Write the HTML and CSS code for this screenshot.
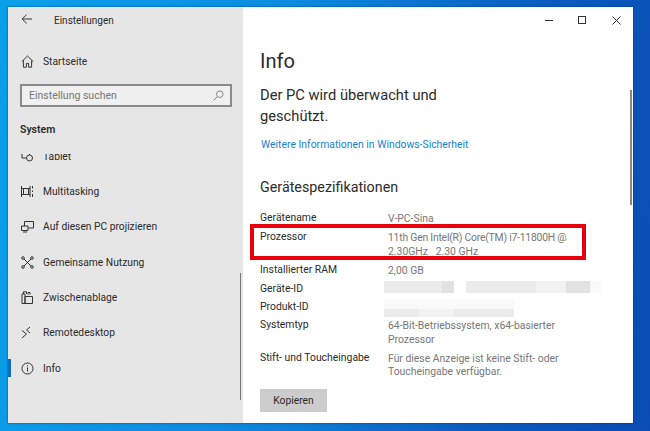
FILE: index.html
```html
<!DOCTYPE html>
<html lang="de">
<head>
<meta charset="utf-8">
<title>Einstellungen</title>
<link rel="stylesheet" href="styles.css">
</head>
<body>
<div class="window">
  <aside class="sidebar">
    <div class="titlebar">
      <svg class="back" width="12" height="12" viewBox="0 0 12 12"><path d="M11 6H1.200M5.600 1.600L1.200 6l4.400 4.400" fill="none" stroke="#333" stroke-width="1"/></svg>
      <span class="apptitle">Einstellungen</span>
    </div>
    <div class="home">
      <svg class="icon" width="13" height="13" viewBox="0 0 13 13"><path d="M.8 6.600L6.500 1l5.700 5.600M2.400 5.400v6.800h3V8.400h2.200v3.800h3V5.400" fill="none" stroke="#333" stroke-width="1"/></svg>
      <span>Startseite</span>
    </div>
    <div class="search">
      <span>Einstellung suchen</span>
      <svg width="11" height="11" viewBox="0 0 11 11"><circle cx="6.800" cy="4.200" r="3.300" fill="none" stroke="#888"/><path d="M4.400 6.600L.6 10.400" stroke="#888"/></svg>
    </div>
    <h2 class="section">System</h2>
    <nav class="nav">
      <div class="nav-list">
        <div class="item">
          <svg class="icon" width="13" height="13" viewBox="0 0 13 13"><circle cx="8.500" cy="8" r="3" fill="none" stroke="#333"/><path d="M8.500 3v2M1 3v5h4.500" fill="none" stroke="#333"/></svg>
          <span>Tablet</span>
        </div>
        <div class="item">
          <svg class="icon" width="13" height="13" viewBox="0 0 13 13"><path d="M.5 1v11M9 1v11M2.500 3.500h5v6h-5zM.5 3.500h2M.5 9.500h2M7.500 3.500H9M7.500 9.500H9M11.500 1v2.500M11.500 5.500v1.500M11.500 9v3" fill="none" stroke="#333"/></svg>
          <span>Multitasking</span>
        </div>
        <div class="item">
          <svg class="icon" width="13" height="13" viewBox="0 0 13 13"><path d="M3.500 6V1.500h9v6.500H7.500M.5 6h6.500v4.500H.5zM2 12h4" fill="none" stroke="#333"/></svg>
          <span>Auf diesen PC projizieren</span>
        </div>
        <div class="item">
          <svg class="icon" width="13" height="13" viewBox="0 0 13 13"><path d="M3 3l7 7M10 3l-7 7" stroke="#333"/><circle cx="2" cy="2" r="1.300" fill="none" stroke="#333"/><circle cx="11" cy="2" r="1.300" fill="none" stroke="#333"/><circle cx="2" cy="11" r="1.300" fill="none" stroke="#333"/><circle cx="11" cy="11" r="1.300" fill="none" stroke="#333"/></svg>
          <span>Gemeinsame Nutzung</span>
        </div>
        <div class="item">
          <svg class="icon" width="13" height="13" viewBox="0 0 13 13"><path d="M1 3h3v9.500H1zM4 5.500h7.500v7H4zM2.500 3V.8h3V3M7 3.500V1.500h2V3.500" fill="none" stroke="#333"/></svg>
          <span>Zwischenablage</span>
        </div>
        <div class="item">
          <svg class="icon" width="13" height="13" viewBox="0 0 13 13"><path d="M1 4.500L5.500 8 1 12M9 1L5.500 4l3.500 3" fill="none" stroke="#333"/></svg>
          <span>Remotedesktop</span>
        </div>
        <div class="item current">
          <span class="marker"></span>
          <svg class="icon" width="13" height="13" viewBox="0 0 13 13"><circle cx="6.500" cy="6.500" r="5.500" fill="none" stroke="#333"/><path d="M6.500 5.500v4M6.500 3.200v1.200" stroke="#333"/></svg>
          <span>Info</span>
        </div>
      </div>
      <span class="side-scroll"></span>
    </nav>
  </aside>
  <main class="content">
    <div class="controls">
      <svg width="8" height="12" viewBox="0 0 8 12"><path d="M0 6.500h8" stroke="#333"/></svg>
      <svg width="9" height="9" viewBox="0 0 9 9"><rect x=".5" y=".5" width="7" height="7" fill="none" stroke="#333"/></svg>
      <svg width="9" height="9" viewBox="0 0 9 9"><path d="M.5.500l8 8M8.500.500l-8 8" stroke="#333"/></svg>
    </div>
    <h1 class="page-title">Info</h1>
    <p class="status">Der PC wird überwacht und<br>geschützt.</p>
    <a class="link">Weitere Informationen in Windows-Sicherheit</a>
    <h2 class="spec-title">Gerätespezifikationen</h2>
    <dl class="specs">
      <dt>Gerätename</dt><dd>V-PC-Sina</dd>
      <dt>Prozessor</dt><dd><span class="cpu">11th Gen Intel(R) Core(TM) i7-11800H @</span><br>2.30GHz &nbsp; 2.30 GHz</dd>
      <dt>Installierter RAM</dt><dd>2,00 GB</dd>
      <dt>Geräte-ID</dt>
      <dd class="mosaic">
        <div class="strip strip-device">
          <i class="s2 w58"></i><i class="s3 w12"></i><i class="none w12"></i><i class="s2 w70"></i><i class="s1 w30"></i><i class="s3 w24"></i><i class="s0 w11"></i>
        </div>
      </dd>
      <dt>Produkt-ID</dt>
      <dd class="mosaic">
        <div class="strip strip-product-top">
          <i class="s0 w130"></i>
        </div>
        <div class="strip strip-product-low">
          <i class="s2 w35"></i><i class="s1 w35"></i><i class="s2 w60"></i>
        </div>
      </dd>
      <dt>Systemtyp</dt><dd>64-Bit-Betriebssystem, x64-basierter<br>Prozessor</dd>
      <dt>Stift- und Toucheingabe</dt><dd>Für diese Anzeige ist keine Stift- oder<br>Toucheingabe verfügbar.</dd>
    </dl>
    <button class="copy">Kopieren</button>
    <span class="main-scroll"></span>
    <span class="highlight"></span>
  </main>
</div>
</body>
</html>
```
FILE: styles.css
```css
* { box-sizing: border-box; }
html, body { height: 100%; }
body {
  margin: 0;
  height: 431px;
  overflow: hidden;
  padding: 7px 17px 8px 8px;
  background: linear-gradient(100deg, #0aa0ea 0%, #0c8ce0 40%, #0b5cc0 75%, #0a4cb4 100%);
  font-family: Roboto, "Open Sans", sans-serif;
  color: #2b2b2b;
}
.window {
  display: flex;
  height: 416px;
  box-shadow: 0 0 2px rgba(0, 40, 90, .7);
}
.sidebar {
  width: 235px;
  background: #e6e6e6;
  display: flex;
  flex-direction: column;
}
.titlebar {
  display: flex;
  align-items: center;
  height: 26px;
  padding: 0 0 0 13px;
  font-size: 10px;
}
.back { margin-top: -2px; }
.apptitle { margin-left: 21px; }
.home {
  display: flex;
  align-items: center;
  height: 16px;
  margin-top: 20px;
  padding-left: 13px;
  font-size: 10.300px;
}
.home .icon { margin-right: 9px; }
.search {
  display: flex;
  align-items: center;
  justify-content: space-between;
  width: 212px;
  height: 23px;
  margin: 15px 0 0 12px;
  padding: 0 6px 0 7px;
  border: 2px solid #8a8a8a;
  background: #f0f0f0;
  color: #777;
  font-size: 10.500px;
}
.section {
  margin: 15px 0 0 12px;
  font-size: 10.500px;
  line-height: 16px;
  font-weight: 600;
}
.nav {
  position: relative;
  flex: 1;
  margin-top: 16px;
  overflow: hidden;
}
.nav-list { margin-top: -15.500px; }
.item {
  position: relative;
  display: flex;
  align-items: center;
  height: 35.330px;
  padding-left: 13px;
  font-size: 10.250px;
}
.item .icon { margin-right: 9px; flex: none; }
.marker {
  position: absolute;
  left: 0;
  top: 9px;
  width: 3px;
  height: 18px;
  background: #0a6fc4;
}
.side-scroll {
  position: absolute;
  right: 2px;
  top: 119px;
  width: 1.500px;
  height: 127px;
  background: #777;
}
.content {
  position: relative;
  flex: 1;
  background: #fff;
  padding-left: 17px;
}
.controls {
  display: flex;
  justify-content: flex-end;
  align-items: center;
  gap: 25px;
  height: 26px;
  padding-right: 12px;
}
.page-title {
  margin: 14px 0 0;
  font-size: 20px;
  line-height: 28px;
  font-weight: 400;
}
.status {
  margin: 10px 0 0;
  font-size: 14.700px;
  line-height: 20.500px;
}
.link {
  display: block;
  margin: 11px 0 0 1px;
  font-size: 10.400px;
  line-height: 16px;
  color: #1a7fd0;
}
.spec-title {
  margin: 24px 0 0;
  font-size: 14.300px;
  line-height: 20px;
  font-weight: 400;
}
.specs {
  display: grid;
  grid-template-columns: 128px 1fr;
  margin: 14px 0 0;
  font-size: 10.400px;
  line-height: 13.330px;
  row-gap: 4.900px;
}
.specs dt { margin: 0; }
.specs dd { margin: 1px 0 0; color: #777; white-space: nowrap; }
.cpu { letter-spacing: -.22px; }
.specs .mosaic { margin: 0 0 0 -4px; height: 13px; }
.strip { display: flex; }
.strip i { display: block; height: 100%; }
.strip-device { height: 12px; margin-top: -1px; }
.strip-product-top { height: 10px; margin-top: -1px; }
.strip-product-low { height: 8px; }
.s0 { background: #f9f9f9; }
.s1 { background: #f2f2f2; }
.s2 { background: #ebebeb; }
.s3 { background: #e2e2e2; }
.none { background: #fff; }
.w11 { width: 11px; }
.w12 { width: 12px; }
.w24 { width: 24px; }
.w30 { width: 30px; }
.w35 { width: 35px; }
.w58 { width: 58px; }
.w60 { width: 60px; }
.w70 { width: 70px; }
.w130 { width: 130px; }
.copy {
  display: block;
  width: 67px;
  height: 23px;
  margin-top: 10px;
  border: 0;
  background: #cccccc;
  font: inherit;
  font-size: 10.300px;
  color: #2b2b2b;
}
.main-scroll {
  position: absolute;
  right: 1px;
  top: 83px;
  width: 2px;
  height: 115px;
  background: #888;
}
.highlight {
  position: absolute;
  left: 7px;
  top: 217px;
  width: 336px;
  height: 36px;
  border: 4px solid #e8000d;
}
```
